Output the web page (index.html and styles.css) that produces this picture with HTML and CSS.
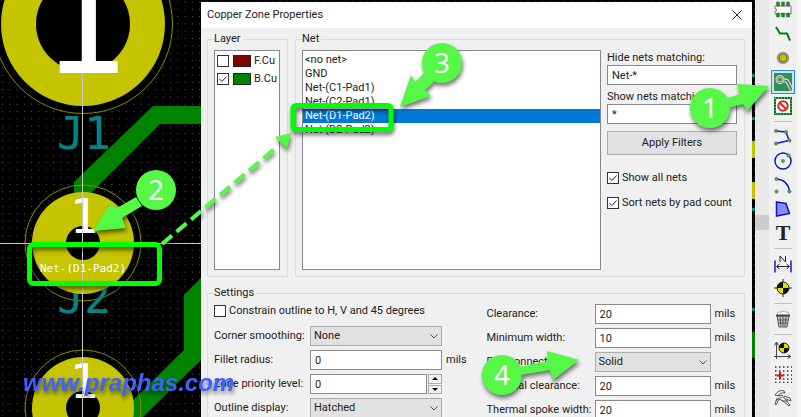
FILE: index.html
```
<!DOCTYPE html>
<html lang="en">
<head>
    <meta charset="utf-8">
    <title>Copper Zone Properties</title>
    <meta name="viewport" content="width=device-width, initial-scale=1">
    <link rel="stylesheet" href="styles.css">
</head>
<body>
    <div class="app">
        <main class="canvas">
            <svg class="board" width="755" height="417">
                <defs>
                    <pattern id="dots" width="7.3" height="7.3" patternUnits="userSpaceOnUse" x="2" y="1.5">
                        <rect width="1" height="1" fill="#5c5c5c"/>
                    </pattern>
                </defs>
                <rect width="100%" height="100%" fill="#000"/>
                <rect width="100%" height="100%" fill="url(#dots)"/>
                <!-- tracks -->
                <g fill="#008400">
                    <path d="M153 106H205V124H160L91 193V200H74V182z"/>
                    <path d="M205 274L184 295V350L133 400V417H143L205 356z"/>
                    <rect x="752" y="332" width="3" height="26"/>
                </g>
                <!-- pads -->
                <g fill="#000" stroke="#8a8a00">
                    <circle cx="83" cy="24" r="89.5"/>
                    <circle cx="83" cy="243" r="58" fill="none"/>
                    <circle cx="83" cy="408" r="58" fill="none"/>
                </g>
                <g class="refs">
                    <text x="57" y="149">J1</text>
                    <text x="57" y="313">J2</text>
                </g>
                <g fill="#c4c400">
                    <circle cx="83" cy="24" r="82"/>
                    <circle cx="83" cy="243" r="51"/>
                    <circle cx="83" cy="408" r="51"/>
                    <rect x="752" y="141" width="3" height="17"/>
                    <rect x="752" y="182" width="3" height="17"/>
                </g>
                <g fill="#000">
                    <circle cx="83" cy="24" r="47"/>
                    <circle cx="83" cy="243" r="17"/>
                    <circle cx="83" cy="408" r="17"/>
                </g>
                <g fill="#008484">
                    <rect x="752" y="74" width="3" height="3"/>
                    <rect x="752" y="117" width="3" height="3"/>
                    <rect x="752" y="208" width="3" height="3"/>
                    <rect x="752" y="308" width="3" height="3"/>
                </g>
                <g class="pad-nums">
                    <text class="big" x="84" y="73">1</text>
                    <text x="84" y="233">1</text>
                    <text x="84" y="398">1</text>
                </g>
                <path d="M0 243.500H201M82.500 73V417" stroke="#c8c8c8"/>
                <text class="net-label" x="40" y="272">Net-(D1-Pad2)</text>
            </svg>

            <section class="dialog">
                <header class="titlebar">
                    <h1>Copper Zone Properties</h1>
                    <button class="close" aria-label="Close">
                        <svg width="10" height="10"><path d="M.5.5l9 9M9.500.5l-9 9" stroke="#222" fill="none"/></svg>
                    </button>
                </header>
                <form class="body">
                    <div class="top">
                        <fieldset class="layer">
                            <legend>Layer</legend>
                            <div class="list layers">
                                <label><input type="checkbox"><i class="swatch red"></i>F.Cu</label>
                                <label><input type="checkbox" checked><i class="swatch green"></i>B.Cu</label>
                            </div>
                        </fieldset>
                        <fieldset class="net">
                            <legend>Net</legend>
                            <div class="net-cols">
                                <ul class="list nets" role="listbox" aria-label="Net">
                                    <li role="option">&lt;no net&gt;</li>
                                    <li role="option">GND</li>
                                    <li role="option">Net-(C1-Pad1)</li>
                                    <li role="option">Net-(C2-Pad1)</li>
                                    <li role="option" class="selected" aria-selected="true">Net-(D1-Pad2)</li>
                                    <li role="option">Net-(D2-Pad2)</li>
                                </ul>
                                <div class="filters">
                                    <label for="hide">Hide nets matching:</label>
                                    <input type="text" id="hide" value="Net-*">
                                    <label for="show">Show nets matching:</label>
                                    <input type="text" id="show" value="*">
                                    <button type="button" class="apply">Apply Filters</button>
                                    <label class="check"><input type="checkbox" checked>Show all nets</label>
                                    <label class="check"><input type="checkbox" checked>Sort nets by pad count</label>
                                </div>
                            </div>
                        </fieldset>
                    </div>
                    <fieldset class="settings">
                        <legend>Settings</legend>
                        <div class="settings-cols">
                            <div class="col">
                                <label class="check"><input type="checkbox">Constrain outline to H, V and 45 degrees</label>
                                <div class="rows left">
                                    <label for="corner">Corner smoothing:</label>
                                    <select id="corner"><option>None</option></select>
                                    <span></span>
                                    <label for="fillet">Fillet radius:</label>
                                    <input type="text" id="fillet" value="0">
                                    <span>mils</span>
                                    <label for="priority">Zone priority level:</label>
                                    <div class="spin">
                                        <input type="text" id="priority" value="0">
                                        <div class="spin-btns">
                                            <button type="button" aria-label="Up"><svg width="6" height="3"><path d="M0 3L3 0L6 3z"/></svg></button>
                                            <button type="button" aria-label="Down"><svg width="6" height="3"><path d="M0 0L3 3L6 0z"/></svg></button>
                                        </div>
                                    </div>
                                    <span></span>
                                    <label for="outline">Outline display:</label>
                                    <select id="outline"><option>Hatched</option></select>
                                    <span></span>
                                </div>
                            </div>
                            <div class="rows right">
                                <label for="clearance">Clearance:</label>
                                <input type="text" id="clearance" value="20">
                                <span>mils</span>
                                <label for="minwidth">Minimum width:</label>
                                <input type="text" id="minwidth" value="10">
                                <span>mils</span>
                                <label for="padconn">Pad connections:</label>
                                <select id="padconn"><option>Solid</option></select>
                                <span></span>
                                <label for="thclear">Thermal clearance:</label>
                                <input type="text" id="thclear" value="20">
                                <span>mils</span>
                                <label for="spoke">Thermal spoke width:</label>
                                <input type="text" id="spoke" value="20">
                                <span>mils</span>
                            </div>
                        </div>
                    </fieldset>
                </form>
            </section>
        </main>

        <div class="scrollbar"><div class="thumb"></div></div>

        <nav class="toolbar">
            <button aria-label="Add footprints"><svg viewBox="0 0 18 18"><path d="M1 5h16v8H1v-2.500a1.500 1.500 0 0 0 0-3z" fill="#fff" stroke="#777"/><g fill="#00a000" stroke="#555" stroke-width=".5"><path d="M2.500 1h3v4h-3zM7.500 1h3v4h-3zM12.500 1h3v4h-3zM2.500 12h3v4h-3zM7.500 12h3v4h-3zM12.500 12h3v4h-3z"/></g></svg></button>
            <button aria-label="Route tracks"><svg viewBox="0 0 18 18"><path d="M2 2l4 6.500h7l3 7" fill="none" stroke="#008400" stroke-width="2"/></svg></button>
            <button aria-label="Add vias"><svg viewBox="0 0 18 18"><circle cx="9" cy="9" r="5" fill="#c4c400" stroke="#999" stroke-width="2.500"/><circle cx="9" cy="9" r="4" fill="none" stroke="#77770a"/></svg></button>
            <button class="active" aria-label="Add filled zones"><svg viewBox="0 0 18 18"><rect width="18" height="18" fill="#2f9150"/><path d="M7 6.500L13 8l5 9" fill="none" stroke="#ddd" stroke-width="4"/><path d="M7 6.500L13 8l5 9" fill="none" stroke="#777" stroke-width="2"/><circle cx="6" cy="6.500" r="3.200" fill="#2f9150" stroke="#ddd" stroke-width="2.500"/><circle cx="6" cy="6.500" r="3.200" fill="none" stroke="#888"/></svg></button>
            <button aria-label="Add keepout areas"><svg viewBox="0 0 18 18"><rect x="1" y="1" width="16" height="16" fill="#fff" stroke="#007a20" stroke-width="2"/><rect x="1" y="1" width="16" height="16" fill="none" stroke="#9fd0a8" stroke-dasharray="1 2"/><circle cx="9" cy="9" r="4.700" fill="#fff" stroke="#e02020" stroke-width="2"/><path d="M5.700 5.700l6.600 6.600" stroke="#e02020" stroke-width="2"/></svg></button>
            <hr>
            <button aria-label="Add graphic lines"><svg viewBox="0 0 18 18"><path d="M2 3l10 1 3 8.500L2 15.500" fill="none" stroke="#1414c8" stroke-width="1.500"/><g class="node"><circle cx="2" cy="3" r="1.700"/><circle cx="12" cy="4" r="1.700"/><circle cx="15.500" cy="12.500" r="1.700"/><circle cx="2" cy="15.500" r="1.700"/></g></svg></button>
            <button aria-label="Add graphic circle"><svg viewBox="0 0 18 18"><circle cx="9" cy="9" r="8" fill="none" stroke="#1414c8" stroke-width="1.500"/><g class="node"><circle cx="9" cy="9" r="1.700"/><circle cx="14.500" cy="3.500" r="1.700"/></g></svg></button>
            <button aria-label="Add graphic arc"><svg viewBox="0 0 18 18"><path d="M2.500 3Q14 4 15.500 15.500" fill="none" stroke="#1414c8" stroke-width="1.500"/><g class="node"><circle cx="2.500" cy="3" r="1.700"/><circle cx="2.500" cy="15.500" r="1.700"/><circle cx="15.500" cy="15.500" r="1.700"/></g></svg></button>
            <button aria-label="Add graphic polygon"><svg viewBox="0 0 18 18"><path d="M2.500 2l9.500 1.500 3.500 10L2.500 16z" fill="#8a8af5" stroke="#1414c8" stroke-width="1.500"/></svg></button>
            <button class="text-tool" aria-label="Add text">T</button>
            <hr>
            <button aria-label="Add dimension"><svg viewBox="0 0 18 18"><path d="M1 5.500v12M17 5.500v12" stroke="#1414e0" stroke-width="1.500"/><path d="M3 11.500h12M5.500 9L2.500 11.500l3 2.500M12.500 9l3 2.500-3 2.500M6 7V1l5.500 6V1" fill="none" stroke="#222"/></svg></button>
            <button aria-label="Add layer alignment target"><svg viewBox="0 0 18 18"><path d="M9 0v18M0 9h18" stroke="#333"/><circle cx="9" cy="9" r="6" fill="#e0e000" stroke="#222"/><path d="M9 9V3a6 6 0 0 0-6 6zM9 9v6a6 6 0 0 0 6-6z" fill="#111"/></svg></button>
            <hr>
            <button aria-label="Delete items"><svg viewBox="0 0 18 18"><path d="M3 4q1-3 4-2 2-2 4 0 4-1 4 2" fill="#fff" stroke="#aaa"/><path d="M3 6h12l-2 11H5z" fill="#ccc" stroke="#555"/><path d="M6 7l1 9M9 7v9M12 7l-1 9M4 10h10M4.500 13h9" stroke="#555" fill="none"/><path d="M2 5.500h14" stroke="#444" stroke-width="2"/></svg></button>
            <hr>
            <button aria-label="Set origin"><svg viewBox="0 0 18 18"><path d="M2.500 18V2M.5 4.500L2.500 1l2 3.500M0 15.500h16M13.500 13.500l3.500 2-3.500 2" fill="none" stroke="#444"/><circle cx="10" cy="7" r="5" fill="#e0e000" stroke="#222"/><path d="M10 7V2a5 5 0 0 0-5 5zM10 7v5a5 5 0 0 0 5-5z" fill="#111"/></svg></button>
            <button aria-label="Set grid origin"><svg viewBox="0 0 18 18"><path d="M1 2h17M1 6h17M1 10h17M1 14h17M1 17.500h17" stroke="#333" stroke-width="1.500" stroke-dasharray="1.500 2.500"/><path d="M6 7v7M2.500 10.500h7" stroke="#e01010" stroke-width="2"/></svg></button>
            <button aria-label="Measure distance"><svg viewBox="0 0 18 18"><path d="M1 6Q5 0 10 2l1 2Q6 3 4 7zM4 7l4-1 3 4 5 6-1 1-6-5-4-2-3 6-1-1 2-6M10 7l6 2 1 3-5-2M2 11l6-3M8 12l6 0" fill="none" stroke="#555"/></svg></button>
        </nav>

        <!-- callouts drawn over the window -->
        <svg class="notes" width="801" height="417">
            <g fill="none" stroke="#00ff00" stroke-width="5">
                <rect x="29.500" y="244.500" width="130" height="39" rx="4"/>
                <rect x="293" y="105.500" width="98" height="24" rx="3"/>
            </g>
            <g fill="#55f846">
                <path d="M162 244L277 147" stroke="#55f846" stroke-width="4" stroke-dasharray="13 6"/>
                <path d="M291 133L275 137L287 149z"/>
                <path d="M728 98L740 94L737 84L769 86L747 111L743 104L728 108z"/>
                <path d="M136 197L117 208L110 204L93 231L126 228L122 218L142 206z"/>
                <path d="M424 73L415 82L411 75L400 107L431 96L425 90L434 82z"/>
                <path d="M520 367L548 361L547 351L579 360L553 380L550 370L520 375z"/>
                <circle cx="710" cy="108" r="20"/>
                <circle cx="156" cy="190" r="20"/>
                <circle cx="442" cy="63" r="20"/>
                <circle cx="502" cy="375" r="20"/>
            </g>
            <g class="nums">
                <text x="710" y="118">1</text>
                <text x="156" y="200">2</text>
                <text x="442" y="73">3</text>
                <text x="502" y="385">4</text>
            </g>
            <text class="watermark" x="23" y="391">www.praphas.com</text>
        </svg>
    </div>
</body>
</html>
```
FILE: styles.css
```
* {
    box-sizing: border-box;
}

html, body {
    margin: 0;
    height: 100%;
    overflow: hidden;
    background-color: #fff;
    font-family: Roboto, "Noto Sans", sans-serif;
    font-size: 11px;
    line-height: 14px;
    color: #222;
}

button, input, select {
    font: inherit;
    color: inherit;
    margin: 0;
}

.app {
    position: relative;
    display: flex;
    height: 100vh;
    overflow: hidden;
}

/* board */
.canvas {
    position: relative;
    flex: 1;
    overflow: hidden;
    background-color: #000;
}

.board {
    display: block;
}

.board text {
    font-family: "DejaVu Sans Mono", monospace;
}

.refs {
    font-size: 45px;
    fill: #008484;
}

.pad-nums {
    font-size: 48px;
    fill: #fff;
    text-anchor: middle;
}

.pad-nums .big {
    font-size: 144px;
}

.board .net-label {
    font-size: 11px;
    fill: #fff;
}

/* dialog */
.dialog {
    position: absolute;
    top: 2px;
    right: 3px;
    bottom: 0;
    left: 201px;
    overflow: hidden;
    background-color: #f0f0f0;
}

.titlebar {
    display: flex;
    align-items: center;
    justify-content: space-between;
    height: 26px;
    padding: 0 10px 0 6px;
    background-color: #fff;
}

.titlebar h1 {
    margin: 0;
    font-size: 11px;
    font-weight: normal;
}

.close {
    display: flex;
    padding: 0;
    border: 0;
    background: none;
}

.body {
    padding: 4px 7px 0 6px;
}

.top {
    display: flex;
    gap: 7px;
}

fieldset {
    min-width: 0;
    margin: 0;
    padding: 4px 7px 6px 6px;
    border: 1px solid #dcdcdc;
}

legend {
    height: 14px;
    padding: 0 2px 0 0;
}

.layer {
    width: 81px;
}

.net {
    flex: 1;
}

.net-cols {
    display: flex;
    gap: 6px;
}

.list {
    height: 220px;
    margin: 0;
    border: 1px solid #828790;
    background-color: #fff;
}

.layers {
    padding: 1px 2px;
}

.layers label {
    display: flex;
    align-items: center;
    height: 18px;
}

.swatch {
    width: 18px;
    height: 12px;
    margin: 0 3px 0 4px;
    border: 1px solid #222;
}

.red {
    background-color: #840000;
}

.green {
    background-color: #008400;
}

.nets {
    flex: 1;
    padding: 2px 0;
    list-style: none;
}

.nets li {
    padding-left: 2px;
}

.nets .selected {
    background-color: #0078d7;
    color: #fff;
}

.filters {
    display: flex;
    flex-direction: column;
    width: 130px;
    padding-top: 1px;
    white-space: nowrap;
}

.filters input[type="text"] {
    margin-bottom: 5px;
}

.apply {
    height: 24px;
    margin: 2px 0 16px;
    border: 1px solid #adadad;
    background-color: #e1e1e1;
}

.check {
    display: flex;
    align-items: center;
    gap: 3px;
    height: 14px;
}

.filters .check {
    margin-bottom: 11px;
}

input[type="text"], select {
    width: 100%;
    min-width: 0;
    height: 20px;
    padding: 0 4px;
    border: 1px solid #8a8a8a;
    border-radius: 0;
    background-color: #fff;
}

select {
    appearance: none;
    padding: 0 3px;
    border-color: #adadad;
    background: #e1e1e1 url("data:image/svg+xml,%3Csvg xmlns='http://www.w3.org/2000/svg' width='8' height='5'%3E%3Cpath d='M.5.5L4 4L7.500.5' fill='none' stroke='%23555'/%3E%3C/svg%3E") no-repeat right 3px center;
}

input[type="checkbox"] {
    appearance: none;
    flex: none;
    width: 12px;
    height: 12px;
    border: 1px solid #333;
    background: #fff no-repeat center;
}

input[type="checkbox"]:checked {
    background-image: url("data:image/svg+xml,%3Csvg xmlns='http://www.w3.org/2000/svg' width='8' height='7'%3E%3Cpath d='M.5 3L3 5.500L7.500.5' fill='none' stroke='%23222'/%3E%3C/svg%3E");
}

/* settings */
.settings {
    margin-top: 9px;
}

.settings-cols {
    display: grid;
    grid-template-columns: 272fr 250fr;
}

.rows {
    display: grid;
    grid-auto-rows: 20px;
    gap: 4px;
    align-items: center;
    align-content: start;
    white-space: nowrap;
}

.left {
    grid-template-columns: 92px 132px 1fr;
    margin-top: 8px;
}

.right {
    grid-template-columns: 104px 116px 1fr;
}

.spin {
    display: flex;
    gap: 1px;
}

.spin-btns {
    display: flex;
    flex-direction: column;
    gap: 1px;
}

.spin-btns button {
    display: flex;
    flex: 1;
    align-items: center;
    justify-content: center;
    width: 14px;
    padding: 0;
    border: 1px solid #adadad;
    background-color: #f0f0f0;
}

/* right side */
.scrollbar {
    width: 14px;
    padding-top: 215px;
    background-color: #e9e9e9;
}

.thumb {
    height: 15px;
    background-color: #cdcdcd;
}

.toolbar {
    display: flex;
    flex-direction: column;
    align-items: center;
    width: 32px;
    margin-top: -2px;
    border-right: 4px solid #f7f7f7;
    background-color: #f0f0f0;
}

.toolbar button {
    display: flex;
    flex: none;
    align-items: center;
    justify-content: center;
    width: 24px;
    height: 24px;
    padding: 0;
    border: 1px solid transparent;
    background: none;
}

.toolbar svg {
    width: 18px;
    height: 18px;
}

.toolbar .active {
    border: 1px solid #2a8ae0;
    background-color: #cce4f7;
}

.toolbar hr {
    flex: none;
    width: 18px;
    height: 1px;
    margin: 3px 0;
    border: 0;
    background-color: #c0c0c0;
}

.toolbar .text-tool {
    font: bold 22px "Liberation Serif", serif;
}

.node {
    fill: #35b04a;
    stroke: #666;
    stroke-width: .5;
}

/* callouts */
.notes {
    position: absolute;
    top: 0;
    left: 0;
    pointer-events: none;
}

.notes g {
    filter: drop-shadow(1px 3px 2px rgba(0, 0, 0, .55));
}

.notes .nums {
    filter: none;
    font-family: "Noto Sans", sans-serif;
    font-size: 28px;
    fill: #fff;
    text-anchor: middle;
}

.watermark {
    font: italic bold 24px "Liberation Sans", Arial, sans-serif;
    fill: #4060ff;
    filter: drop-shadow(1px 3px 2px rgba(0, 0, 0, .5));
}
```
